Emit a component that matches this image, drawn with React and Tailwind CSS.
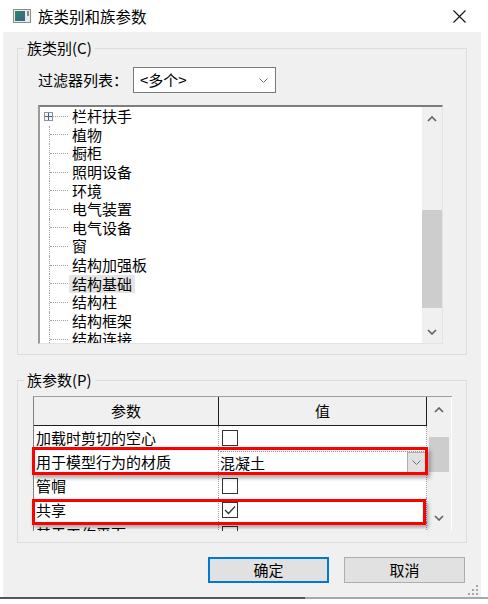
import React from "react";

const CATEGORIES = [
  "栏杆扶手",
  "植物",
  "橱柜",
  "照明设备",
  "环境",
  "电气装置",
  "电气设备",
  "窗",
  "结构加强板",
  "结构基础",
  "结构柱",
  "结构框架",
  "结构连接",
];

function Chevron({ up, className = "" }) {
  return (
    <svg width="10" height="6" viewBox="0 0 10 6" className={className}>
      <polyline
        points={up ? "1,5 5,1 9,5" : "1,1 5,5 9,1"}
        fill="none"
        stroke="#606060"
        strokeWidth="1.6"
      />
    </svg>
  );
}

function SmallChevron() {
  return (
    <svg width="9" height="5" viewBox="0 0 9 5">
      <polyline points="0.5,0.5 4.5,4.5 8.5,0.5" fill="none" stroke="#707070" strokeWidth="1" />
    </svg>
  );
}

function TitleIcon() {
  return (
    <svg width="18" height="14" viewBox="0 0 18 14">
      <defs>
        <linearGradient id="ti" x1="0" y1="0" x2="1" y2="1">
          <stop offset="0" stopColor="#2f8a6a" />
          <stop offset="1" stopColor="#35608f" />
        </linearGradient>
      </defs>
      <rect x="0.5" y="0.5" width="17" height="13" fill="#eaeaea" stroke="#8c8c8c" />
      <rect x="2" y="2" width="10" height="10" fill="url(#ti)" />
      <rect x="14" y="2" width="2" height="5" fill="#8c8c8c" />
    </svg>
  );
}

function Checkbox({ checked }) {
  return (
    <div className="w-[16px] h-[16px] border border-[#333333] bg-white flex items-center justify-center">
      {checked && (
        <svg width="12" height="10" viewBox="0 0 12 10">
          <polyline points="1,5 4.5,8.5 11,1.5" fill="none" stroke="#333333" strokeWidth="1.3" />
        </svg>
      )}
    </div>
  );
}

function TreeRow({ label, first, selected }) {
  return (
    <div className="flex h-[18.6px] shrink-0 items-center">
      {first ? (
        <div className="flex items-center">
          <div className="w-[4px]" />
          <div className="w-[9px] h-[9px] border border-[#919191] bg-[#f4f4f4] flex items-center justify-center">
            <svg width="7" height="7" viewBox="0 0 7 7">
              <path d="M0 3.5H7M3.5 0V7" stroke="#3c5fa8" strokeWidth="1" />
            </svg>
          </div>
          <div className="w-[15px] border-t border-dotted border-[#a0a0a0]" />
        </div>
      ) : (
        <div className="flex self-stretch">
          <div className="w-[9px]" />
          <div className="w-[19px] border-l border-dotted border-[#a0a0a0] flex items-center">
            <div className="w-full border-t border-dotted border-[#a0a0a0]" />
          </div>
        </div>
      )}
      <span
        className={
          "ml-[1px] px-[3px] h-[18px] leading-[18px] text-[15px] text-black " +
          (selected ? "bg-[#e5e5e5]" : "")
        }
      >
        {label}
      </span>
    </div>
  );
}

function GridRow({ label, children, combo }) {
  return (
    <div className="flex h-[24px] shrink-0">
      <div className="w-[185px] border-r border-dotted border-[#a0a0a0] pl-[2px] flex items-center text-[15px] leading-[20px] text-black whitespace-nowrap">
        {label}
      </div>
      <div
        className={
          "flex-1 border-r border-dotted border-[#a0a0a0] flex items-center " +
          (combo ? "pl-[1px]" : "pl-[3px]")
        }
      >
        {children}
      </div>
    </div>
  );
}

export default function App() {
  return (
    <div className="w-[488px] h-[604px] bg-white flex flex-col overflow-hidden font-['Noto_Sans_CJK_SC','Microsoft_YaHei',sans-serif] text-black">
      {/* title bar */}
      <div className="h-[32px] shrink-0 flex items-center pl-[13px] pr-[22px]">
        <TitleIcon />
        <span className="ml-[7px] text-[15.5px] leading-[20px]">族类别和族参数</span>
        <div className="flex-1" />
        <svg width="13" height="13" viewBox="0 0 13 13">
          <path d="M0.5 0.5L12.5 12.5M12.5 0.5L0.5 12.5" stroke="#111" strokeWidth="1.1" />
        </svg>
      </div>

      {/* body */}
      <div className="ml-[3px] w-[478px] h-[565px] shrink-0 bg-[#f0f0f0] pt-[6px] pl-[14px] flex flex-col">
        <fieldset className="w-[450px] border border-[#dcdcdc] p-0 m-0">
          <legend className="ml-[6px] px-[3px] text-[15px] leading-[20px]">族类别(C)</legend>
          <div className="pt-[9px] pl-[20px] pr-[22px] pb-[10px]">
            <div className="flex items-center h-[26px]">
              <span className="w-[95px] text-[15px] leading-[20px]">过滤器列表：</span>
              <div className="w-[143px] h-[26px] border border-[#7a7a7a] bg-white flex items-center pl-[6px] pr-[7px]">
                <span className="flex-1 text-[15px] leading-[20px]">&lt;多个&gt;</span>
                <SmallChevron />
              </div>
            </div>

            <div className="mt-[12px] w-[405px] h-[239px] flex bg-white border-t-2 border-l-2 border-t-[#7d7d7d] border-l-[#9a9a9a] border-r border-b border-r-[#e3e3e3] border-b-[#e3e3e3]">
              <div className="flex-1 flex flex-col overflow-hidden">
                {CATEGORIES.map((c, i) => (
                  <TreeRow key={c} label={c} first={i === 0} selected={c === "结构基础"} />
                ))}
              </div>
              <div className="w-[20px] bg-[#f0f0f0] flex flex-col">
                <div className="h-[24px] flex items-center justify-center">
                  <Chevron up />
                </div>
                <div className="h-[79px]" />
                <div className="h-[98px] bg-[#cdcdcd]" />
                <div className="flex-1" />
                <div className="h-[22px] flex items-center justify-center">
                  <Chevron />
                </div>
              </div>
            </div>
          </div>
        </fieldset>

        <fieldset className="mt-[15px] w-[450px] border border-[#dcdcdc] p-0 m-0">
          <legend className="ml-[6px] px-[3px] text-[15px] leading-[20px]">族参数(P)</legend>
          <div className="pt-[6px] pl-[15px] pr-[14px] pb-[11px]">
            <div className="relative w-[419px] h-[135px]">
              <div className="w-full h-full flex bg-white border-t border-t-[#a0a0a0] border-l border-l-[#828282] overflow-hidden">
                <div className="w-[393px] flex flex-col">
                  <div className="h-[29px] shrink-0 flex bg-[#f0f0f0] border-b border-[#1e1e1e]">
                    <div className="w-[185px] border-r border-[#1e1e1e] flex items-center justify-center text-[15px] leading-[20px]">
                      参数
                    </div>
                    <div className="flex-1 border-r border-[#1e1e1e] flex items-center justify-center text-[15px] leading-[20px]">
                      值
                    </div>
                  </div>
                  <GridRow label="加载时剪切的空心">
                    <Checkbox />
                  </GridRow>
                  <GridRow label="用于模型行为的材质" combo>
                    <div className="flex-1 h-[22px] border-t border-dotted border-[#909090] flex items-center">
                      <span className="flex-1 text-[15px] leading-[20px]">混凝土</span>
                      <div className="w-[19px] h-[21px] bg-[#e1e1e1] border border-[#adadad] flex items-center justify-center">
                        <SmallChevron />
                      </div>
                    </div>
                  </GridRow>
                  <GridRow label="管帽">
                    <Checkbox />
                  </GridRow>
                  <GridRow label="共享">
                    <Checkbox checked />
                  </GridRow>
                  <GridRow label="基于工作平面">
                    <Checkbox />
                  </GridRow>
                </div>
                <div className="w-[24px] bg-[#f0f0f0] flex flex-col">
                  <div className="h-[26px] flex items-center justify-center">
                    <Chevron up />
                  </div>
                  <div className="h-[14px]" />
                  <div className="h-[35px] mx-[2px] bg-[#cdcdcd]" />
                  <div className="flex-1" />
                  <div className="h-[26px] flex items-center justify-center">
                    <Chevron />
                  </div>
                </div>
              </div>
              {/* annotation boxes */}
              <div className="absolute left-[-1px] top-[51px] w-[396px] h-[28px] border-[3px] border-[#ff0000] shadow-[2px_3px_4px_rgba(0,0,0,0.35)]" />
              <div className="absolute left-[-1px] top-[103px] w-[394px] h-[26px] border-[3px] border-[#ff0000] shadow-[2px_3px_4px_rgba(0,0,0,0.35)]" />
            </div>
          </div>
        </fieldset>

        <div className="mt-[14px] flex justify-end gap-[15px] pr-[16px]">
          <button className="w-[121px] h-[26px] bg-[#e1e1e1] border-2 border-[#0078d7] text-[15px] leading-[20px]">
            确定
          </button>
          <button className="w-[121px] h-[26px] bg-[#e1e1e1] border border-[#adadad] text-[15px] leading-[20px]">
            取消
          </button>
        </div>

        <div className="mt-[2px] flex justify-end pr-[2px]">
          <svg width="11" height="11" viewBox="0 0 11 11">
            <g fill="#a8a8a8">
              <rect x="8" y="0" width="2" height="2" />
              <rect x="4" y="4" width="2" height="2" />
              <rect x="8" y="4" width="2" height="2" />
              <rect x="0" y="8" width="2" height="2" />
              <rect x="4" y="8" width="2" height="2" />
              <rect x="8" y="8" width="2" height="2" />
            </g>
          </svg>
        </div>
      </div>

      <div className="h-[2px] shrink-0 flex">
        <div className="w-[305px] bg-[#555555]" />
        <div className="flex-1 bg-[#a8a8a8]" />
      </div>
    </div>
  );
}
